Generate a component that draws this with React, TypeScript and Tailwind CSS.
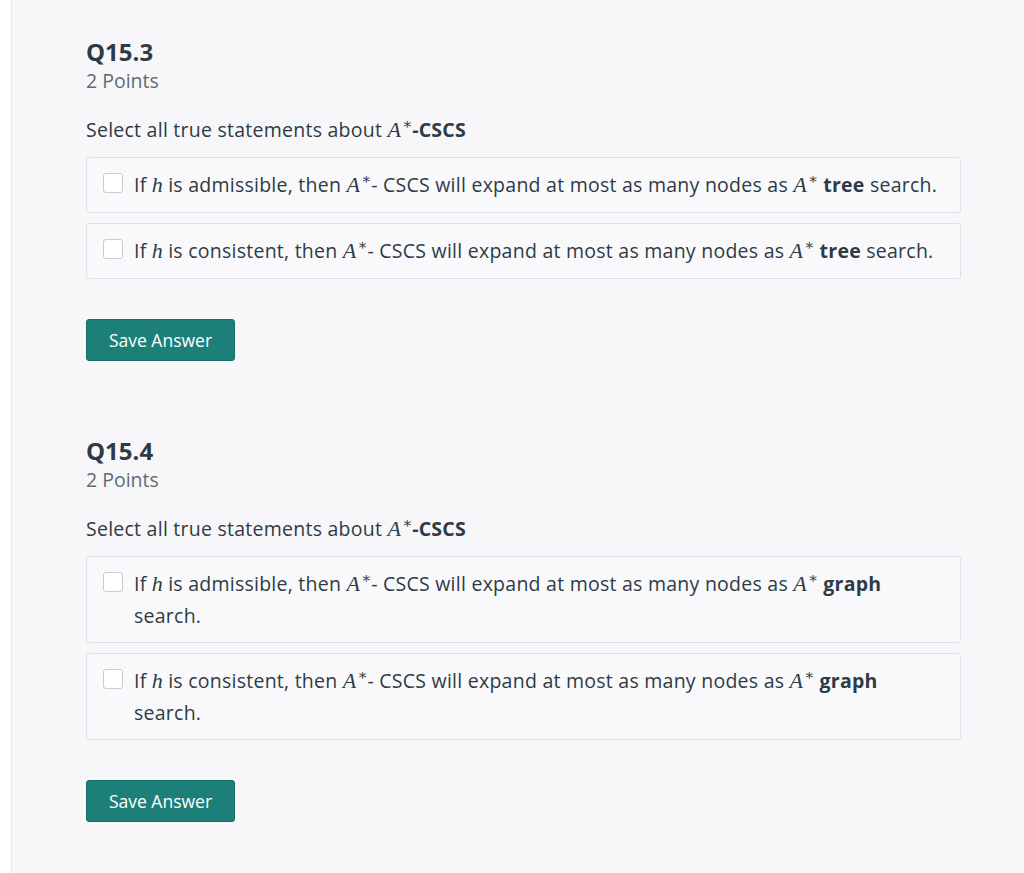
import React from 'react';

const sans = { fontFamily: '"Open Sans", Lato, sans-serif' };
const serif = { fontFamily: '"Liberation Serif", "DejaVu Serif", serif' };

function AStar() {
  return (
    <span className="whitespace-nowrap tracking-normal" style={serif}>
      <span className="italic text-[22px]">A</span>
      <sup className="text-[15px] -top-[0.55em] ml-[1px]">∗</sup>
    </span>
  );
}

function H() {
  return (
    <span className="italic text-[22px] tracking-normal" style={serif}>
      h
    </span>
  );
}

interface Option {
  cond: string;
  kind: string;
}

function OptionRow({ cond, kind }: Option) {
  return (
    <label className="flex items-start gap-[11px] border border-[#dfe2e7] rounded-[3px] bg-[#f9f9fb] pl-[16px] pr-5 py-[11px]">
      <span className="mt-[4px] w-[20px] h-[20px] shrink-0 rounded-[3px] border border-[#c5ccd3] bg-white" />
      <span className="text-[19.5px] tracking-[0.25px] leading-[31px] text-[#2d3b45]">
        If <H /> is {cond}, then <AStar />- CSCS will expand at most as many nodes as <AStar />{' '}
        <b className="font-bold">{kind}</b> search.
      </span>
    </label>
  );
}

function Question({ num, kind }: { num: string; kind: string }) {
  return (
    <section>
      <h2 className="text-[24px] leading-[28px] font-bold text-[#2d3b45]">{num}</h2>
      <p className="text-[19.5px] leading-[26px] text-[#5f6b73] mt-[2px]">2 Points</p>
      <p className="text-[19.5px] tracking-[0.25px] leading-[28px] text-[#2d3b45] mt-[22px]">
        Select all true statements about <AStar />
        <b className="font-bold">-CSCS</b>
      </p>
      <div className="flex flex-col gap-[10px] mt-[12px]">
        <OptionRow cond="admissible" kind={kind} />
        <OptionRow cond="consistent" kind={kind} />
      </div>
      <button className="mt-[40px] w-[149px] h-[42px] rounded-[3px] bg-[#1c7f78] border border-[#176d67] text-white text-[17.5px]">
        Save Answer
      </button>
    </section>
  );
}

export default function App() {
  return (
    <div className="flex min-h-[873px] w-[1024px]" style={sans}>
      <div className="w-[12px] bg-white border-r border-[#e4e6ea] shrink-0" />
      <main className="flex-1 bg-[#f7f7fa] pl-[74px] pr-[63px] pt-[38px] flex flex-col gap-[76px]">
        <Question num="Q15.3" kind="tree" />
        <Question num="Q15.4" kind="graph" />
      </main>
    </div>
  );
}
